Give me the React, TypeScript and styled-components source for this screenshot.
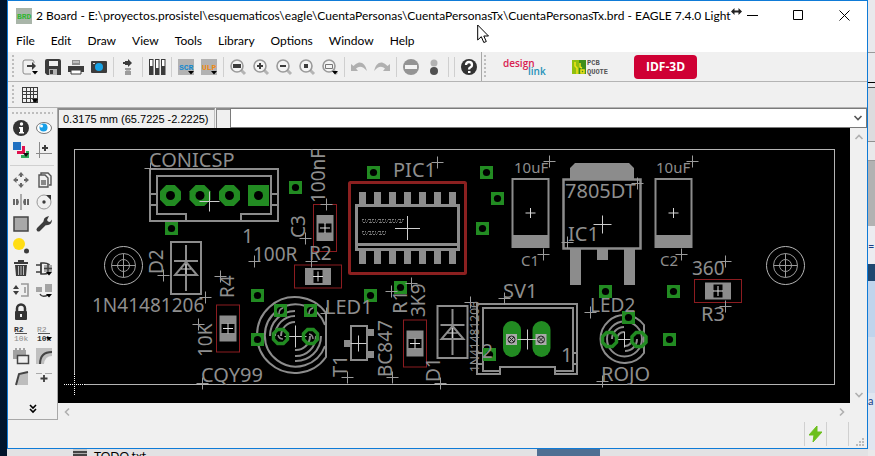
import React from "react";
import styled, { createGlobalStyle, css } from "styled-components";

const ui = 'Lato, "Open Sans", sans-serif';

const GlobalStyle = createGlobalStyle`
  * { box-sizing: border-box; }
  html, body { margin: 0; height: 100%; overflow: hidden; }
  button { font: inherit; color: inherit; background: none; border: 0; padding: 0; }
  svg { display: block; }
`;

/* ---------- desktop behind the window ---------- */

const Desktop = styled.div`
  display: grid;
  grid-template: 1fr 7px / 7px 1fr 7px;
  height: 100vh;
  overflow: hidden;
  font: 12px/16px ${ui};
  color: #000;
  background: #001833;
`;

const LeftEdge = styled.div`
  grid-row: 1 / 3;
  background: linear-gradient(#00142c, #001c3c 50%, #00142b);
`;

const RightEdge = styled.div`
  grid-row: 1 / 3;
  grid-column: 3;
  display: flex;
  flex-direction: column;
  overflow: hidden;
  background: #e9e9ea;
`;

const Slab = styled.div<{ $h: number; $c: string; $line?: string }>`
  flex: 0 0 ${(p) => p.$h}px;
  background: ${(p) => p.$c};
  border-bottom: ${(p) => (p.$line ? `1px solid ${p.$line}` : "0")};
  color: #1b3f86;
  font-size: 11px;
  overflow: hidden;
`;

const BottomEdge = styled.div`
  grid-row: 2;
  grid-column: 2;
  display: flex;
  overflow: hidden;
  background: #e2e2e4;
`;

const TaskIcon = styled.div`
  width: 14px;
  margin-left: 66px;
  border-top: 2px solid #c8c8c8;
  background: repeating-linear-gradient(#444 0 2px, #aaa 2px 3px);
`;

const TaskName = styled.span`
  margin-left: 7px;
  line-height: 14px;
  flex: 0 0 443px;
`;

const TaskBlock = styled.div`
  width: 63px;
  background: #4f6f93;
`;

/* ---------- window ---------- */

const Window = styled.main`
  grid-row: 1;
  grid-column: 2;
  position: relative;
  display: flex;
  flex-direction: column;
  min-width: 0;
  border: 1px solid #0f7bd7;
  background: #f0f0f0;
`;

const TitleBar = styled.header`
  display: flex;
  align-items: center;
  height: 29px;
  padding-left: 8px;
  background: #fff;
`;

const AppBadge = styled.span`
  width: 16px;
  margin-right: 4px;
`;

const Title = styled.h1`
  flex: 1;
  min-width: 0;
  margin: 0;
  font: 400 12px/16px ${ui};
  white-space: nowrap;
  display: flex;
`;

const ResizeMark = styled.span`
  flex: none;
  width: 12px;
`;

const CaptionButton = styled.button`
  display: grid;
  place-items: center;
  flex: none;
  width: 46px;
  height: 29px;
`;

const MenuBar = styled.nav`
  display: flex;
  gap: 16px;
  height: 22px;
  padding: 0 8px;
  line-height: 22px;
  background: #fff;
`;

const ToolBar = styled.div<{ $h: number }>`
  display: flex;
  align-items: center;
  height: ${(p) => p.$h}px;
  padding-left: 4px;
  border-bottom: 1px solid #b4b4b4;
  background: #f0f0f0;
`;

const Grip = styled.span<{ $flat?: boolean }>`
  ${(p) =>
    p.$flat
      ? css`
          height: 2px;
          margin: 0 4px;
          background: repeating-linear-gradient(90deg, #bdbdbd 0 2px, transparent 2px 4px);
        `
      : css`
          width: 2px;
          align-self: stretch;
          margin: 3px 4px 2px 0;
          background: repeating-linear-gradient(#bdbdbd 0 2px, transparent 2px 4px);
        `}
`;

const ToolButton = styled.button`
  display: grid;
  place-items: center;
  width: 23px;
  height: 22px;
  svg { overflow: visible; }
`;

const Divider = styled.span`
  width: 6px;
  height: 20px;
  background: linear-gradient(#cfcfcf, #cfcfcf) 3px 0 / 1px 100% no-repeat;
`;

const StrongDivider = styled.span`
  width: 4px;
  align-self: stretch;
  background: linear-gradient(#a8a8a8, #a8a8a8) 1px 0 / 1px 100% no-repeat;
`;

const AddOns = styled.div`
  display: flex;
  align-items: center;
  gap: 26px;
  margin-left: 12px;
`;

const IdfButton = styled.button`
  width: 63px;
  height: 24px;
  border-radius: 4px;
  background: #cf0034;
  color: #fff;
  font: 700 12px/24px "Open Sans", sans-serif;
`;

const Workspace = styled.div`
  flex: 1;
  display: grid;
  grid-template: auto 1fr 17px / 50px 1fr 17px;
  min-height: 0;
`;

const Palette = styled.aside`
  grid-row: 1 / 4;
  display: flex;
  flex-direction: column;
  padding: 4px 0;
  border-right: 1px solid #a8a8a8;
  border-bottom: 1px solid #a8a8a8;
`;

const PaletteGrid = styled.div`
  display: grid;
  grid-template-columns: 23px 23px;
  padding: 3px 0 3px 1px;
`;

const PaletteRule = styled.hr`
  width: 44px;
  height: 1px;
  margin: 1px 2px 0;
  border: 0;
  background: #d0d0d0;
`;

const MoreButton = styled.button`
  display: grid;
  place-items: center;
  height: 12px;
  margin-top: auto;
`;

const CommandRow = styled.div`
  grid-column: 2 / 4;
  display: flex;
  height: 20px;
`;

const Readout = styled.output`
  width: 157px;
  padding-left: 4px;
  border: solid #8a8a8a;
  border-width: 2px 1px 0 1px;
  border-right-color: #c0c0c0;
  font: 11px/19px "Liberation Sans", sans-serif;
  white-space: nowrap;
`;

const SmallField = styled.span`
  width: 14px;
  margin-left: 1px;
  border: solid #8a8a8a;
  border-width: 2px 0 0 1px;
`;

const Command = styled.div`
  flex: 1;
  display: flex;
  border: 1px solid #7a7a7a;
  background: #fff;
`;

const CommandInput = styled.input`
  flex: 1;
  min-width: 0;
  border: 0;
  outline: 0;
  background: none;
  font: 12px/16px ${ui};
`;

const DropButton = styled.button`
  display: grid;
  place-items: center;
  width: 17px;
`;

const Canvas = styled.div`
  overflow: hidden;
  min-height: 0;
  background: #000;
  svg { width: 100%; height: 100%; }
`;

const ScrollBar = styled.div<{ $vertical?: boolean }>`
  display: flex;
  flex-direction: ${(p) => (p.$vertical ? "column" : "row")};
  justify-content: space-between;
  background: #f0f0f0;
`;

const ScrollButton = styled.button`
  display: grid;
  place-items: center;
  width: 17px;
  height: 17px;
`;

const StatusBar = styled.footer`
  display: flex;
  justify-content: flex-end;
  align-items: center;
  height: 28px;
  padding-right: 3px;
`;

const StatusCell = styled.span`
  display: grid;
  place-items: center;
  width: 22px;
  height: 24px;
  border-left: 1px solid #d0d0d0;
`;

const StatusEnd = styled(StatusCell)`
  width: 16px;
  place-items: end;
`;

const Pointer = styled.div`
  position: absolute;
  left: 469px;
  top: 23px;
`;

/* ---------- icons ---------- */

const D = "#3c3c3c";
const G = "#9a9a9a";
const drop = <path d="M10 12h6l-3 3.5z" fill="#000" />;
const lens = (
  <>
    <path d="M11 11l4 4" stroke="#b4b4b4" strokeWidth="3" />
    <circle cx="7" cy="7" r="6" fill="#f4f4f4" stroke={G} strokeWidth="1.6" />
  </>
);

const glyphs: Record<string, React.ReactNode> = {
  export: (
    <>
      <path d="M12 4V3a2 2 0 0 0-2-2H3a2 2 0 0 0-2 2v10a2 2 0 0 0 2 2h6" fill="none" stroke="#8a8a8a" />
      <path d="M5 7h8" stroke={D} strokeWidth="2" />
      <path d="M10 3l4 4-4 4z" fill={D} />
      {drop}
    </>
  ),
  save: (
    <>
      <path d="M0 2q0-2 2-2h12q2 0 2 2v14H2l-2-2z" fill={D} />
      <path d="M4 2h9v5H4z" fill="#f0f0f0" />
      <path d="M4 10h8v6H4z" fill="#b4b4b4" />
      <path d="M5 11h3v4H5z" fill={D} />
    </>
  ),
  print: (
    <>
      <path d="M4 1h8v5H4z" fill="#8e8e8e" />
      <path d="M5 3h6" stroke="#eee" />
      <path d="M0 7h16v6h-3v-2H3v2H0z" fill={D} />
      <path d="M3 11h10v4H3z" fill="#fff" stroke={D} />
    </>
  ),
  camera: (
    <>
      <path d="M1 2h14q1 0 1 1v10q0 1-1 1H1q-1 0-1-1V3q0-1 1-1z" fill={D} />
      <circle cx="8" cy="8" r="4" fill="#17a3e6" />
      <path d="M2 4h2v1H2z" fill="#ddd" />
    </>
  ),
  board: (
    <>
      <path d="M5 2h3V0l4 4-4 4V6H5V5H3V3h2z" fill={D} />
      <path d="M5 9h6v2H5zM5 12h6v4H5z" fill="#9c9c9c" />
      <path d="M6 11h4v1H6z" fill="#b8b8b8" />
    </>
  ),
  use: (
    <>
      {[0, 6, 12].map((x, i) => (
        <g key={x}>
          <path d={`M${x} 0h4.500v16h-4.500z`} fill={D} />
          <path d={`M${x + 1} 1h2.500v${i === 1 ? 8 : 6}h-2.500z`} fill="#fff" />
        </g>
      ))}
    </>
  ),
  scr: (
    <>
      <path d="M0 0h16v16H0z" fill="#b2b2b2" />
      <text x="1" y="11" fontSize="8" fontWeight="700" fontFamily="Liberation Mono" fill="#1389cf">SCR</text>
      {drop}
    </>
  ),
  ulp: (
    <>
      <path d="M0 0h16v16H0z" fill="#b2b2b2" />
      <text x="1" y="11" fontSize="8" fontWeight="700" fontFamily="Liberation Mono" fill="#f08a10">ULP</text>
      {drop}
    </>
  ),
  fit: <>{lens}<path d="M3 5h8v4H3z" fill={D} /></>,
  zoomIn: <>{lens}<path d="M7 4v6M4 7h6" stroke={D} strokeWidth="2" /></>,
  zoomOut: <>{lens}<path d="M4 7h6" stroke={D} strokeWidth="2" /></>,
  redraw: <>{lens}<path d="M5 5h4v4H5z" fill={D} /></>,
  select: <>{lens}<path d="M3.500 5.500h7v4h-7z" fill="none" stroke="#777" />{drop}</>,
  undo: <path d="M0 5v7h7L5 9.500Q10 5 16 12 14 3 8 3.500 5 4 2.500 7z" fill="#b0b0b0" />,
  redo: <path d="M16 5v7H9l2-2.500Q6 5 0 12 2 3 8 3.500q3 .5 5.500 3.500z" fill="#b0b0b0" />,
  stop: <><circle cx="8" cy="8" r="8" fill="#949494" /><path d="M2 6h12v4H2z" fill="#f4f4f4" /></>,
  go: <><circle cx="8" cy="4" r="3.500" fill="#b2b2b2" /><circle cx="8" cy="12" r="4" fill="#505050" /></>,
  help: (
    <>
      <circle cx="8" cy="8" r="8" fill="#333" />
      <path d="M5 6q0-3 3-3t3 3q0 1.500-1.500 2.300T8 10.500" fill="none" stroke="#fff" strokeWidth="2.300" />
      <path d="M7 12h2.500v2H7z" fill="#fff" />
    </>
  ),
  grid: (
    <>
      <path d="M0 0h16v16H0z" fill={D} />
      <path d="M1 1h3v3H1zM5 1h3v3H5zM9 1h2v3H9zM12 1h3v3h-3zM1 5h3v2H1zM5 5h3v2H5zM9 5h2v2H9zM12 5h3v2h-3zM1 8h3v3H1zM5 8h3v3H5zM9 8h2v3H9zM12 8h3v3h-3zM1 12h3v3H1zM5 12h3v3H5zM9 12h2v3H9z" fill="#f0f0f0" />
      {drop}
    </>
  ),
  info: (
    <>
      <circle cx="8" cy="8" r="8" fill="#333" />
      <path d="M6 7h4v5h1v1.500H6V12h1V8.500H6z" fill="#fff" />
      <circle cx="8.500" cy="4" r="1.700" fill="#fff" />
    </>
  ),
  eye: (
    <>
      <ellipse cx="8" cy="8" rx="7.500" ry="5.500" fill="#fff" stroke="#777" />
      <circle cx="7.500" cy="7.500" r="4" fill="#18a0e8" />
      <circle cx="5.500" cy="6" r="1.500" fill="#fff" />
    </>
  ),
  layers: (
    <>
      <path d="M0 0h8v8H0z" fill="#1e6fc0" />
      <path d="M9 4h3v8H4V9h5z" fill="#e0104e" />
      <path d="M13 9h3v7H8v-3h5z" fill="#2eaa5a" />
      <path d="M10 11h6l-3 4z" fill="#111" />
    </>
  ),
  mark: (
    <>
      <path d="M3.500 0v16M0 11.500h16" stroke="#8a8a8a" />
      <path d="M9 3v6M6 6h6" stroke={D} strokeWidth="2" />
    </>
  ),
  move: (
    <path d="M8 0l3 3.500H9V5H7V3.500H5zM8 16l-3-3.500h2V11h2v1.500h2zM0 8l3.500-3v2H5v2H3.500v2zM16 8l-3.500 3V9H11V7h1.500V5z" fill="#666" />
  ),
  copy: (
    <>
      <path d="M5 3V1h7l3 3v9h-2" fill="none" stroke="#555" strokeWidth="1.400" />
      <path d="M3 3h6l3 3v9H3z" fill="#eee" stroke="#555" strokeWidth="1.400" />
      <path d="M5 8h5v5H5z" fill="#888" />
    </>
  ),
  mirror: <path d="M0 5h2v6H0zM3 5h2l1 3-1 3H3zM14 5h2v6h-2zM11 5h2v6h-2l-1-3zM7.500 0h1v16h-1z" fill="#666" />,
  rotate: (
    <>
      <circle cx="8" cy="8" r="7" fill="none" stroke="#999" />
      <circle cx="8" cy="8" r="1.700" fill={D} />
      <path d="M10 1h5v5z" fill="#333" />
    </>
  ),
  group: <path d="M1 1h14v14H1z" fill="#a8a8a8" stroke="#444" strokeWidth="1.500" />,
  wrench: (
    <>
      <path d="M2.500 13.500L9.500 6.500" stroke={D} strokeWidth="4" strokeLinecap="round" />
      <path d="M8 8Q6 1 13 0l-2 4 1 1.500 2 .5 2-2.500Q16 10 9 9z" fill={D} />
    </>
  ),
  yellow: <><circle cx="6" cy="6" r="6" fill="#ffdd15" /><circle cx="13.500" cy="13" r="2.500" fill={D} /></>,
  trash: (
    <>
      <path d="M1 2h14v2H1zM5 0h6v2H5zM2 5h12l-1 11H3z" fill={D} />
      <path d="M5.500 6v9M8 6v9M10.500 6v9" stroke="#bbb" />
    </>
  ),
  add: (
    <>
      <path d="M0 5h5M0 12h5M5 3v11" fill="none" stroke={D} strokeWidth="1.400" />
      <path d="M5 3h3q6 0 7 5.500-1 5.500-7 5.500H5z" fill="none" stroke={D} strokeWidth="1.400" />
      <path d="M8 5h8v7H8z" fill="#aaa" />
      <path d="M12 4v9M8 8.500h8" stroke="#444" strokeWidth="1.500" />
      {drop}
    </>
  ),
  pinswap: (
    <>
      <path d="M3 3l3 4H0zM3 13L0 9h6z" fill={D} />
      <path d="M8 2h7v12H8M12 5v6" fill="none" stroke="#999" strokeWidth="1.600" />
    </>
  ),
  replace: (
    <>
      <path d="M0 5h6v5H0zM9 2h7v8H9z" fill="#a4a4a4" />
      <path d="M4 12q2 4 8 1" fill="none" stroke={D} strokeWidth="1.500" />
      {drop}
    </>
  ),
  lock: (
    <>
      <path d="M4 8V4.500a4 4 0 0 1 8 0V8" fill="none" stroke="#333" strokeWidth="2.500" />
      <rect x="2" y="7" width="12" height="9" rx="1" fill="#333" />
      <path d="M7 10h2v3H7z" fill="#eee" />
    </>
  ),
  name: (
    <>
      <text x="1" y="6" fontSize="8" fontWeight="700" fontFamily="Liberation Mono" fill="#333">R2</text>
      <path d="M2 7.500h12" stroke="#555" />
      <text x="1" y="15" fontSize="8" fontFamily="Liberation Mono" fill="#888">10k</text>
    </>
  ),
  value: (
    <>
      <text x="1" y="6" fontSize="8" fontFamily="Liberation Mono" fill="#888">R2</text>
      <path d="M2 7.500h12" stroke="#555" />
      <text x="1" y="15" fontSize="8" fontWeight="700" fontFamily="Liberation Mono" fill="#333">10k</text>
      <path d="M10 11h6l-3 3.500z" fill="#000" />
    </>
  ),
  smash: (
    <>
      <path d="M0 2h2V0h2v2h2V0h2v2h2V0h2v2h1v9H0z" fill="#a2a2a2" />
      <path d="M4.500 7.500h11v8h-11z" fill="#eee" stroke="#444" strokeWidth="1.500" />
    </>
  ),
  miter: (
    <>
      <path d="M0 16V0h16v8q-7 0-8 8z" fill="#c0c0c0" />
      <path d="M4 16Q4 4 16 4" fill="none" stroke="#444" strokeWidth="2" />
    </>
  ),
  split: (
    <>
      <path d="M3 15L6 4l9-2v13z" fill="#bdbdbd" />
      <path d="M3 15L6 4l9-2" fill="none" stroke="#444" strokeWidth="2" />
    </>
  ),
  optimize: (
    <>
      <path d="M0 3.500h6M9 3.500h7" stroke="#aaa" />
      <path d="M8 5v7M4.500 8.500h7" stroke={D} strokeWidth="1.800" />
    </>
  ),
};

const Icon = ({ name }: { name: string }) => (
  <svg width="16" height="16" viewBox="0 0 16 16" aria-hidden="true">
    {glyphs[name]}
  </svg>
);

const Chevron = ({ dir, color = "#b0b0b0" }: { dir: "up" | "down" | "left" | "right"; color?: string }) => {
  const turn = { down: 0, left: 90, up: 180, right: 270 }[dir];
  return (
    <svg width="10" height="10" viewBox="0 0 10 10" aria-hidden="true">
      <path d="M1.500 3L5 6.500 8.500 3" fill="none" stroke={color} strokeWidth="1.600" transform={`rotate(${turn} 5 5)`} />
    </svg>
  );
};

/* ---------- board drawing ---------- */

const SILK = "#8c8c8c";
const GREEN = "#228b22";
const RED = "#8b2020";

const Cross = ({ x, y, r = 6, c = "#9c9c9c" }: { x: number; y: number; r?: number; c?: string }) => (
  <path d={`M${x - r} ${y}H${x + r}M${x} ${y - r}V${y + r}`} stroke={c} strokeWidth="1" fill="none" />
);

const Via = ({ x, y }: { x: number; y: number }) => (
  <g>
    <rect x={x - 6.5} y={y - 6.5} width="13" height="13" fill={GREEN} />
    <circle cx={x} cy={y} r="3.600" fill="#000" />
  </g>
);

const octagon = (x: number, y: number, r: number) => {
  const k = r * 0.414;
  return `M${x - k} ${y - r}H${x + k}L${x + r} ${y - k}V${y + k}L${x + k} ${y + r}H${x - k}L${x - r} ${y + k}V${y - k}Z`;
};

const Label = ({ x, y, t, s = 20, v }: { x: number; y: number; t: string; s?: number; v?: boolean }) => (
  <text
    x={x}
    y={y}
    fontSize={s}
    fill="#8e8e8e"
    transform={v ? `rotate(-90 ${x} ${y})` : undefined}
  >
    {t}
  </text>
);

const Mount = ({ x, y }: { x: number; y: number }) => (
  <g fill="none" stroke="#b4b4b4">
    <circle cx={x} cy={y} r="19" />
    <circle cx={x} cy={y} r="12" stroke="#999" />
    <circle cx={x} cy={y} r="6" stroke="#999" />
    <Cross x={x} y={y} r={12} />
  </g>
);

const Chip = ({ x, y, flat }: { x: number; y: number; flat?: boolean }) => (
  <g>
    <g transform={flat ? `rotate(90 ${x} ${y})` : undefined}>
      <rect x={x - 11.5} y={y - 23.5} width="23" height="47" fill="none" stroke="#8c1c20" />
      <rect x={x - 8.5} y={y - 13} width="17" height="26" fill={SILK} />
      <rect x={x - 6.5} y={y - 4.5} width="13" height="9" fill="#000" />
    </g>
    <Cross x={x} y={y} r={5} c="#e0e0e0" />
  </g>
);

const Diode = ({ x, y }: { x: number; y: number }) => (
  <g fill="none" stroke={SILK} strokeWidth="2">
    <rect x={x - 15} y={y - 26} width="30" height="52" />
    <path d={`M${x} ${y - 23}V${y + 23}M${x - 12} ${y - 7}H${x + 12}M${x} ${y - 6}L${x + 11} ${y + 7}H${x - 11}Z`} />
    <Cross x={x} y={y + 1} r={5} c="#d0d0d0" />
  </g>
);

const Tantalum = ({ x }: { x: number }) => (
  <g>
    <path d={`M${x - 18} 179h36v68h-36z`} fill="none" stroke={SILK} strokeWidth="2" />
    <rect x={x - 18} y="235" width="36" height="13" fill={SILK} />
    <Cross x={x} y={213} r={5} c="#d8d8d8" />
  </g>
);

const Ring = ({ x, y }: { x: number; y: number }) => (
  <path d={octagon(x, y, 7)} fill="none" stroke={GREEN} strokeWidth="3.500" />
);

const pinXs = [362, 377, 392, 407, 422, 437, 452];

const crosses: [number, number][] = [
  [150.5, 168.5], [163.5, 275.5], [220.5, 276.5], [205.5, 297.5], [198.5, 324.5], [202.5, 383.5],
  [254.5, 261.5], [305.5, 238.5], [326.5, 204.5], [311.5, 261.5], [437.5, 162.5], [326.5, 313.5],
  [347.5, 377.5], [392.5, 377.5], [391.5, 291.5], [411.5, 283.5], [440.5, 383.5], [470.5, 302.5],
  [549.5, 161.5], [543.5, 254.5], [637.5, 183.5], [567.5, 242.5], [692.5, 161.5], [681.5, 254.5],
  [504.5, 298.5], [590.5, 312.5], [602.5, 381.5], [725.5, 261.5], [725.5, 306.5],
];

const vias: [number, number][] = [
  [171.5, 228.5], [257.5, 295.5], [257.5, 339.5], [295.5, 187.5], [373.5, 172.5], [370.5, 295.5],
  [400.5, 287.5], [280.5, 310.5], [310.5, 310.5], [486.5, 172.5], [497.5, 198.5], [482.5, 228.5],
  [605.5, 291.5], [673.5, 291.5], [669.5, 339.5], [489.5, 354.5], [628.5, 317.5],
];

const Board = () => (
  <svg
    viewBox="58 128 792 275"
    preserveAspectRatio="xMinYMin meet"
    fontFamily='"Noto Sans", sans-serif'
    fontWeight="400"
    role="img"
    aria-label="Board layout"
  >
    <rect x="74.5" y="149.5" width="760" height="235" fill="none" stroke="#b4b4b4" />
    <Cross x={74.5} y={384.5} r={10} c="#000" />
    <path d="M64 384.500h21M74.500 374v21" stroke="#fff" strokeDasharray="1 1" />
    <Mount x={123.5} y={265.5} />
    <Mount x={785.5} y={265.5} />

    {/* four-pin connector */}
    <g fill="none" stroke={SILK} strokeWidth="2">
      <rect x="150" y="169" width="128" height="52" />
      <path d="M186 221V214H157V176H271V214H241V221M150 194h7M150 205h7M271 194h7M271 205h7" />
    </g>
    {[170.5, 200, 229.5].map((x) => (
      <path key={x} d={octagon(x, 195.5, 10.5)} fill={GREEN} />
    ))}
    <rect x="248" y="185" width="21" height="21" fill={GREEN} />
    {[170.5, 200, 229.5, 258.5].map((x) => (
      <circle key={x} cx={x} cy="195.500" r="4.500" fill="#000" />
    ))}
    <Cross x={209.5} y={201.5} r={10} c="#ccc" />

    <Diode x={186} y={268} />
    <Diode x={452.5} y={332} />
    <Chip x={228} y={328.5} />
    <Chip x={325} y={228} />
    <Chip x={318} y={276.5} flat />
    <Chip x={415} y={343.5} />
    <Chip x={718} y={291} flat />

    {/* PIC microcontroller */}
    <rect x="349.500" y="182.500" width="116" height="91" rx="1" fill="none" stroke={RED} strokeWidth="3" />
    {pinXs.map((x) => (
      <path key={x} d={`M${x - 3} 192h7v13h-7zM${x - 3} 250h7v14h-7z`} fill={SILK} />
    ))}
    <rect x="356.500" y="205.500" width="102" height="44" fill="#000" stroke={SILK} strokeWidth="3" />
    <path d="M357 244.500h102" stroke={SILK} strokeWidth="3" />
    <path d="M362 219.500h42M363 222.500h40M362 231.500h25M363 234.500h22" stroke="#777" strokeDasharray="2 1 1 2 3 1" />
    <path d="M362 221h42M362 233h24" stroke="#777" strokeDasharray="1 2 1 1" />
    <path d="M395 228.500h25M407.500 216v24" stroke="#d0d0d0" />

    {/* LED1 */}
    <g fill="none" stroke={SILK} strokeWidth="2">
      <path d="M326 313A38 38 0 1 0 326 357Z" />
      <path d="M325 325A31 31 0 1 0 325 346" />
      <path d="M270 336A25 25 0 0 1 295 311M275 336A20 20 0 0 1 295 316M281 336A14 14 0 0 1 295 322M321 336A25 25 0 0 1 295 361M316 336A20 20 0 0 1 295 356M310 336A14 14 0 0 1 295 350" />
    </g>
    <Cross x={295.5} y={336.5} r={11} c="#ccc" />

    {/* transistor T1 */}
    <path d="M366 329h8v7h-8zM366 351h8v7h-8zM344 340h7v7h-7z" fill={SILK} />
    <rect x="351" y="326" width="16" height="34" fill="#000" stroke={SILK} strokeWidth="2" />
    <Cross x={358.5} y={343.5} r={8} c="#ccc" />

    {/* capacitors and regulator */}
    <Tantalum x={530.5} />
    <Tantalum x={673.5} />
    <path d="M570 180V168l5-5h54l5 5v12zM570 249h11v36h-11zM624 249h11v36h-11zM597 249h11v11h-11z" fill={SILK} />
    <rect x="563.500" y="179.500" width="77" height="69" fill="#000" stroke={SILK} strokeWidth="2.500" />
    <Cross x={602.5} y={224.5} r={9} c="#ccc" />

    {/* SV1 connector */}
    <g fill="none" stroke={SILK} strokeWidth="2">
      <path d="M477 304H577V374H555V367H500V374H477Z" />
      <path d="M500 371H483V308H573V371H555M477 353h6M477 364h6M573 353h4M573 364h4" />
    </g>
    {[512, 541.5].map((x) => (
      <g key={x}>
        <rect x={x - 9} y="321" width="18" height="36" rx="9" fill={GREEN} />
        <rect x={x - 6} y="334" width="11" height="11" fill="#aaa" />
        <circle cx={x - 0.5} cy="339.500" r="3.500" fill="none" stroke="#222" />
        <path d={`M${x - 3} 337l5 5m0-5l-5 5`} stroke="#222" />
      </g>
    ))}
    <Cross x={527.5} y={339.5} r={10} c="#ccc" />

    {/* LED2 */}
    <g fill="none" stroke={SILK} strokeWidth="2">
      <path d="M644 325A24 24 0 1 0 644 353Z" />
      <circle cx="624.500" cy="339" r="17.500" />
      <path d="M612 339A12 12 0 0 1 624 327M617 339A7 7 0 0 1 624 332M637 339A12 12 0 0 1 625 351M632 339A7 7 0 0 1 625 346" />
    </g>
    <Cross x={624.5} y={339.5} r={8} c="#ccc" />

    {vias.map(([x, y]) => <Via key={`${x},${y}`} x={x} y={y} />)}
    <Ring x={280.5} y={336.5} />
    <Ring x={310.5} y={336.5} />
    <Ring x={609.5} y={339.5} />
    <Ring x={639} y={339.5} />
    <path d="M279 314q0-5 4-6M309 314q0-5 4-6M278 335q1 4 5 4M309 334q4 1 4 5" fill="none" stroke="#8c8c8c" strokeWidth="1.500" />
    {crosses.map(([x, y]) => <Cross key={`${x},${y}`} x={x} y={y} />)}

    <Label x={149} y={167} t="CONICSP" />
    <Label x={242} y={243} t="1" />
    <Label x={253} y={261} t="100R" s={19} />
    <Label x={309} y={260} t="R2" s={19} />
    <Label x={92} y={312} t="1N41481206" s={19} />
    <Label x={201} y={382} t="CQY99" s={20} />
    <Label x={393} y={177} t="PIC1" />
    <Label x={325} y={314} t="LED1" />
    <Label x={565} y={198} t="7805DT" s={20} />
    <Label x={568} y={241} t="IC1" />
    <Label x={503} y={298} t="SV1" />
    <Label x={590} y={312} t="LED2" s={19} />
    <Label x={601} y={381} t="ROJO" />
    <Label x={692} y={275} t="360" s={19} />
    <Label x={701} y={321} t="R3" />
    <Label x={561} y={362} t="1" />
    <Label x={482} y={358} t="2" s={19} />
    <Label x={514} y={173} t="10uF" s={15} />
    <Label x={656} y={173} t="10uF" s={15} />
    <Label x={521} y={266} t="C1" s={15} />
    <Label x={660} y={266} t="C2" s={15} />
    <Label v x={163} y={274} t="D2" s={19} />
    <Label v x={234} y={298} t="R4" s={19} />
    <Label v x={212} y={357} t="10K" s={19} />
    <Label v x={325} y={203} t="100nF" s={19} />
    <Label v x={305} y={238} t="C3" s={19} />
    <Label v x={347} y={377} t="T1" />
    <Label v x={392} y={377} t="BC847" s={19} />
    <Label v x={407} y={314} t="R1" />
    <Label v x={425} y={317} t="3K9" s={19} />
    <Label v x={440} y={382} t="D1" s={19} />
    <Label v x={479} y={372} t="1N41481206" s={12} />
  </svg>
);

/* ---------- page ---------- */

const mainTools = [
  ["export", "save", "print", "camera"],
  ["board"],
  ["use"],
  ["scr", "ulp"],
  ["fit", "zoomIn", "zoomOut", "redraw", "select"],
  ["undo", "redo"],
  ["stop", "go"],
];

const viewTools = ["info", "eye", "layers", "mark"];
const editTools = [
  "move", "copy", "mirror", "rotate", "group", "wrench", "yellow", "", "trash", "add", "pinswap",
  "replace", "lock", "", "name", "value", "smash", "miter", "split", "optimize",
];

const Tool = ({ name }: { name: string }) =>
  name ? <ToolButton aria-label={name}><Icon name={name} /></ToolButton> : <span />;

export default function App() {
  return (
    <>
      <GlobalStyle />
      <Desktop>
        <LeftEdge />
        <Window>
          <TitleBar>
            <AppBadge>
              <svg width="16" height="16" viewBox="0 0 16 16" aria-hidden="true">
                <path d="M0 0h16v16H0z" fill="#a9b5a9" />
                <text x="1" y="11" fontSize="8" fontWeight="700" fontFamily="Liberation Mono" fill="#33b533">BRD</text>
              </svg>
            </AppBadge>
            <Title>
              2 Board - E:\proyectos.prosistel\esquematicos\eagle\CuentaPersonas\CuentaPersonasTx\CuentaPersonasTx.brd - EAGLE 7.4.0 Light
              <ResizeMark>
                <svg width="11" height="7" viewBox="0 0 11 7" aria-hidden="true">
                  <path d="M0 3.500L3.500 0v2.500h4V0L11 3.500 7.500 7V4.500h-4V7z" fill="#222" />
                </svg>
              </ResizeMark>
            </Title>
            <CaptionButton aria-label="Minimize">
              <svg width="11" height="11"><path d="M0 5.500h11" stroke="#000" /></svg>
            </CaptionButton>
            <CaptionButton aria-label="Maximize">
              <svg width="11" height="11"><path d="M.5.5h9v9h-9z" fill="none" stroke="#000" /></svg>
            </CaptionButton>
            <CaptionButton aria-label="Close">
              <svg width="11" height="11"><path d="M.5.5l10 10m0-10l-10 10" stroke="#000" /></svg>
            </CaptionButton>
          </TitleBar>
          <MenuBar>
            {["File", "Edit", "Draw", "View", "Tools", "Library", "Options", "Window", "Help"].map((m) => (
              <button key={m}>{m}</button>
            ))}
          </MenuBar>
          <ToolBar $h={30}>
            <Grip />
            {mainTools.map((group, i) => (
              <React.Fragment key={i}>
                {group.map((n) => <Tool key={n} name={n} />)}
                <Divider />
              </React.Fragment>
            ))}
            <Divider />
            <Tool name="help" />
            <StrongDivider />
            <Grip />
            <AddOns>
              <button aria-label="design link">
                <svg width="44" height="22" viewBox="0 0 44 22" fontFamily="Open Sans" fontWeight="600">
                  <text x="1" y="11" fontSize="10" fill="#d82050">design</text>
                  <text x="26" y="19" fontSize="10" fill="#2390b8">link</text>
                </svg>
              </button>
              <button aria-label="PCB quote">
                <svg width="36" height="18" viewBox="0 0 36 18" fontFamily="Liberation Mono" fontWeight="700" fontSize="7">
                  <path d="M0 2h14v14H0z" fill="#3f8f1c" />
                  <path d="M0 2h7v14H0z" fill="#8fbf10" />
                  <path d="M3 4v4l2 2v6M8 5v4l2 1M9 12h3v3H9z" fill="none" stroke="#f2e21a" strokeWidth="1.500" />
                  <text x="15" y="7" fill="#555">PCB</text>
                  <text x="15" y="16" fill="#555">QUOTE</text>
                </svg>
              </button>
              <IdfButton>IDF-3D</IdfButton>
            </AddOns>
          </ToolBar>
          <ToolBar $h={26}>
            <Grip />
            <Tool name="grid" />
          </ToolBar>
          <Workspace>
            <Palette>
              <Grip $flat />
              <PaletteGrid>
                {viewTools.map((n) => <Tool key={n} name={n} />)}
              </PaletteGrid>
              <PaletteRule />
              <PaletteGrid>
                {editTools.map((n, i) => <Tool key={n || i} name={n} />)}
              </PaletteGrid>
              <MoreButton aria-label="More tools">
                <svg width="8" height="10" viewBox="0 0 8 10">
                  <path d="M1 1l3 3 3-3M1 5l3 3 3-3" fill="none" stroke="#000" strokeWidth="1.600" />
                </svg>
              </MoreButton>
            </Palette>
            <CommandRow>
              <Readout>0.3175 mm (65.7225 -2.2225)</Readout>
              <SmallField />
              <Command>
                <CommandInput aria-label="Command" />
                <DropButton aria-label="Command history"><Chevron dir="down" color="#555" /></DropButton>
              </Command>
            </CommandRow>
            <Canvas><Board /></Canvas>
            <ScrollBar $vertical>
              <ScrollButton aria-label="Scroll up"><Chevron dir="up" /></ScrollButton>
              <ScrollButton aria-label="Scroll down"><Chevron dir="down" /></ScrollButton>
            </ScrollBar>
            <ScrollBar>
              <ScrollButton aria-label="Scroll left"><Chevron dir="left" /></ScrollButton>
              <ScrollButton aria-label="Scroll right"><Chevron dir="right" /></ScrollButton>
            </ScrollBar>
          </Workspace>
          <StatusBar>
            <StatusCell>
              <svg width="13" height="16" viewBox="0 0 13 16" aria-hidden="true">
                <path d="M8 0L0 9h5l-1 7 9-10H8z" fill="#6cbf1c" stroke="#6cbf1c" />
              </svg>
            </StatusCell>
            <StatusCell />
            <StatusEnd>
              <svg width="8" height="8" viewBox="0 0 8 8" aria-hidden="true">
                <path d="M6 0h2v2H6zM3 3h2v2H3zM6 3h2v2H6zM0 6h2v2H0zM3 6h2v2H3zM6 6h2v2H6z" fill="#bbb" />
              </svg>
            </StatusEnd>
          </StatusBar>
          <Pointer>
            <svg width="13" height="20" viewBox="0 0 13 20" aria-hidden="true">
              <path d="M.7 1v15l3.600-3.300L6.800 18.500l2.500-1-2.500-5.500H11.500z" fill="#fff" stroke="#000" />
            </svg>
          </Pointer>
        </Window>
        <RightEdge>
          <Slab $h={53} $c="#e9e9ec" $line="#9a9a9a" />
          <Slab $h={30} $c="#e9e9ec" $line="#000" />
          <Slab $h={5} $c="#e9e9ec" $line="#555" />
          <Slab $h={54} $c="#dcdcde" $line="#909090" />
          <Slab $h={19} $c="#e9e9ea" $line="#999" />
          <Slab $h={65} $c="#b2b2b2" />
          <Slab $h={12} $c="#ececf0" />
          <Slab $h={26} $c="#ececf0">=</Slab>
          <Slab $h={17} $c="#20476f" />
          <Slab $h={56} $c="#c0d4ec" />
          <Slab $h={56} $c="#d3ddec" />
          <Slab $h={57} $c="#e0e6f0">a</Slab>
        </RightEdge>
        <BottomEdge>
          <TaskIcon />
          <TaskName>TODO.txt</TaskName>
          <TaskBlock />
        </BottomEdge>
      </Desktop>
    </>
  );
}
